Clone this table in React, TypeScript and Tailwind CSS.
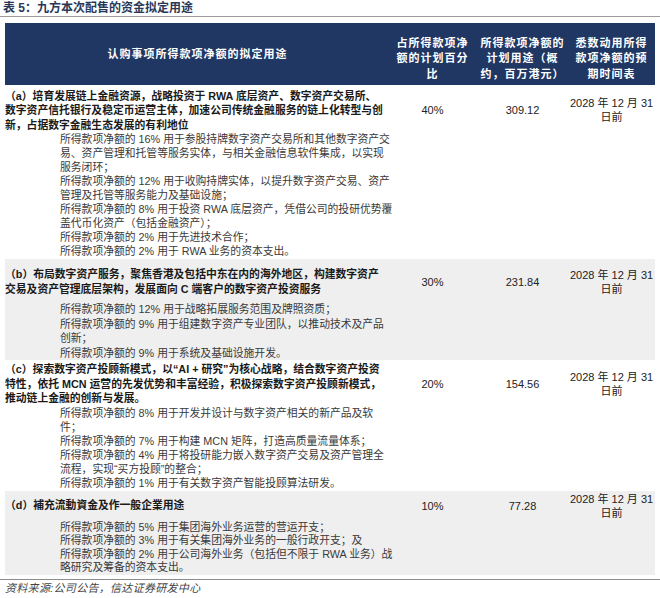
type Section = {
  label: string[];
  pct: string;
  amount: string;
  items: string[][];
  shade: string;
  pad: string;
  listPad: string;
  listLeading: string;
};

const sections: Section[] = [
  {
    label: [
      "（a）培育发展链上金融资源，战略投资于 RWA 底层资产、数字资产交易所、",
      "数字资产信托银行及稳定币运营主体，加速公司传统金融服务的链上化转型与创",
      "新，占据数字金融生态发展的有利地位",
    ],
    pct: "40%",
    amount: "309.12",
    items: [
      [
        "所得款项净额的 16% 用于参股持牌数字资产交易所和其他数字资产交",
        "易、资产管理和托管等服务实体，与相关金融信息软件集成，以实现",
        "服务闭环；",
      ],
      ["所得款项净额的 12% 用于收购持牌实体，以提升数字资产交易、资产", "管理及托管等服务能力及基础设施；"],
      ["所得款项净额的 8% 用于投资 RWA 底层资产，凭借公司的投研优势覆", "盖代币化资产（包括金融资产）；"],
      ["所得款项净额的 2% 用于先进技术合作；"],
      ["所得款项净额的 2% 用于 RWA 业务的资本支出。"],
    ],
    shade: "bg-white",
    pad: "pt-[3.5px]",
    listPad: "pt-0",
    listLeading: "leading-[14px]",
  },
  {
    label: [
      "（b）布局数字资产服务，聚焦香港及包括中东在内的海外地区，构建数字资产",
      "交易及资产管理底层架构，发展面向 C 端客户的数字资产投资服务",
    ],
    pct: "30%",
    amount: "231.84",
    items: [
      ["所得款项净额的 12% 用于战略拓展服务范围及牌照资质；"],
      ["所得款项净额的 9% 用于组建数字资产专业团队，以推动技术及产品", "创新；"],
      ["所得款项净额的 9% 用于系统及基础设施开发。"],
    ],
    shade: "bg-[#efefef]",
    pad: "pt-[8px]",
    listPad: "pt-[6px]",
    listLeading: "leading-[14.5px]",
  },
  {
    label: [
      "（c）探索数字资产投顾新模式，以“AI + 研究”为核心战略，结合数字资产投资",
      "特性，依托 MCN 运营的先发优势和丰富经验，积极探索数字资产投顾新模式，",
      "推动链上金融的创新与发展。",
    ],
    pct: "20%",
    amount: "154.56",
    items: [
      ["所得款项净额的 8% 用于开发并设计与数字资产相关的新产品及软", "件；"],
      ["所得款项净额的 7% 用于构建 MCN 矩阵，打造高质量流量体系；"],
      ["所得款项净额的 4% 用于将投研能力嵌入数字资产交易及资产管理全", "流程，实现“买方投顾”的整合；"],
      ["所得款项净额的 1% 用于有关数字资产智能投顾算法研发。"],
    ],
    shade: "bg-white",
    pad: "pt-[1px]",
    listPad: "pt-0",
    listLeading: "leading-[14px]",
  },
  {
    label: ["（d）補充流動資金及作一般企業用途"],
    pct: "10%",
    amount: "77.28",
    items: [
      ["所得款项净额的 5% 用于集团海外业务运营的营运开支；"],
      ["所得款项净额的 3% 用于有关集团海外业务的一般行政开支；及"],
      ["所得款项净额的 2% 用于公司海外业务（包括但不限于 RWA 业务）战", "略研究及筹备的资本支出。"],
    ],
    shade: "bg-[#efefef]",
    pad: "pt-[1px]",
    listPad: "pt-[1px]",
    listLeading: "leading-[13.5px]",
  },
];

const headCols = [
  ["占所得款项净", "额的计划百分", "比"],
  ["所得款项净额的", "计划用途（概", "约，百万港元）"],
  ["悉数动用所得", "款项净额的预", "期时间表"],
];

export default function App() {
  return (
    <div className="w-[660px] h-[598px] bg-white overflow-hidden font-['Liberation_Sans','Noto_Sans_CJK_SC',sans-serif] text-[#222]">
      <div className="h-[17px] border-b border-[#9c9c9c] pl-[3px] text-[12px] leading-[16px] font-bold text-[#2a3857]">
        表 5：九方本次配售的资金拟定用途
      </div>

      <div className="mx-[5px] mt-[6px]">
        <div className="grid grid-cols-[385px_85px_95px_83px] h-[62px] bg-[#203764] text-white text-[11px] font-bold tracking-[1px]">
          <div className="flex items-center justify-center">认购事项所得款项净额的拟定用途</div>
          {headCols.map((lines, i) => (
            <div key={i} className="flex flex-col items-center justify-end pb-[3px] leading-[15.5px]">
              {lines.map((l) => (
                <span key={l} className="whitespace-nowrap">
                  {l}
                </span>
              ))}
            </div>
          ))}
        </div>

        <div className="flex flex-col gap-[1px] pt-0">
          {sections.map((s) => (
            <div key={s.pct} className={`${s.shade} ${s.pad} grid grid-cols-[385px_85px_95px_83px]`}>
              <div className="self-center text-[10.8px] leading-[14.5px] font-bold text-[#1a1a1a]">
                {s.label.map((l) => (
                  <span key={l} className="block whitespace-nowrap">
                    {l}
                  </span>
                ))}
              </div>
              <div className="self-center text-center text-[11px] leading-[14px]">{s.pct}</div>
              <div className="self-center text-center text-[11px] leading-[14px]">{s.amount}</div>
              <div className="self-center text-center text-[11px] leading-[14px] whitespace-nowrap">
                <span className="block">2028 年 12 月 31</span>
                <span className="block">日前</span>
              </div>

              <div className={`${s.listPad} ${s.listLeading} pl-[55px] text-[10.8px] text-[#3a3a3a]`}>
                {s.items.map((lines, i) => (
                  <div key={i}>
                    {lines.map((l) => (
                      <span key={l} className="block whitespace-nowrap">
                        {l}
                      </span>
                    ))}
                  </div>
                ))}
              </div>
            </div>
          ))}
        </div>
      </div>

      <div className="mt-[4px] border-t border-[#8c8c8c] pl-[5px] pt-[1px] text-[11px] leading-[14px] italic tracking-[0.3px] text-[#444]">
        资料来源:公司公告，信达证券研发中心
      </div>
    </div>
  );
}
